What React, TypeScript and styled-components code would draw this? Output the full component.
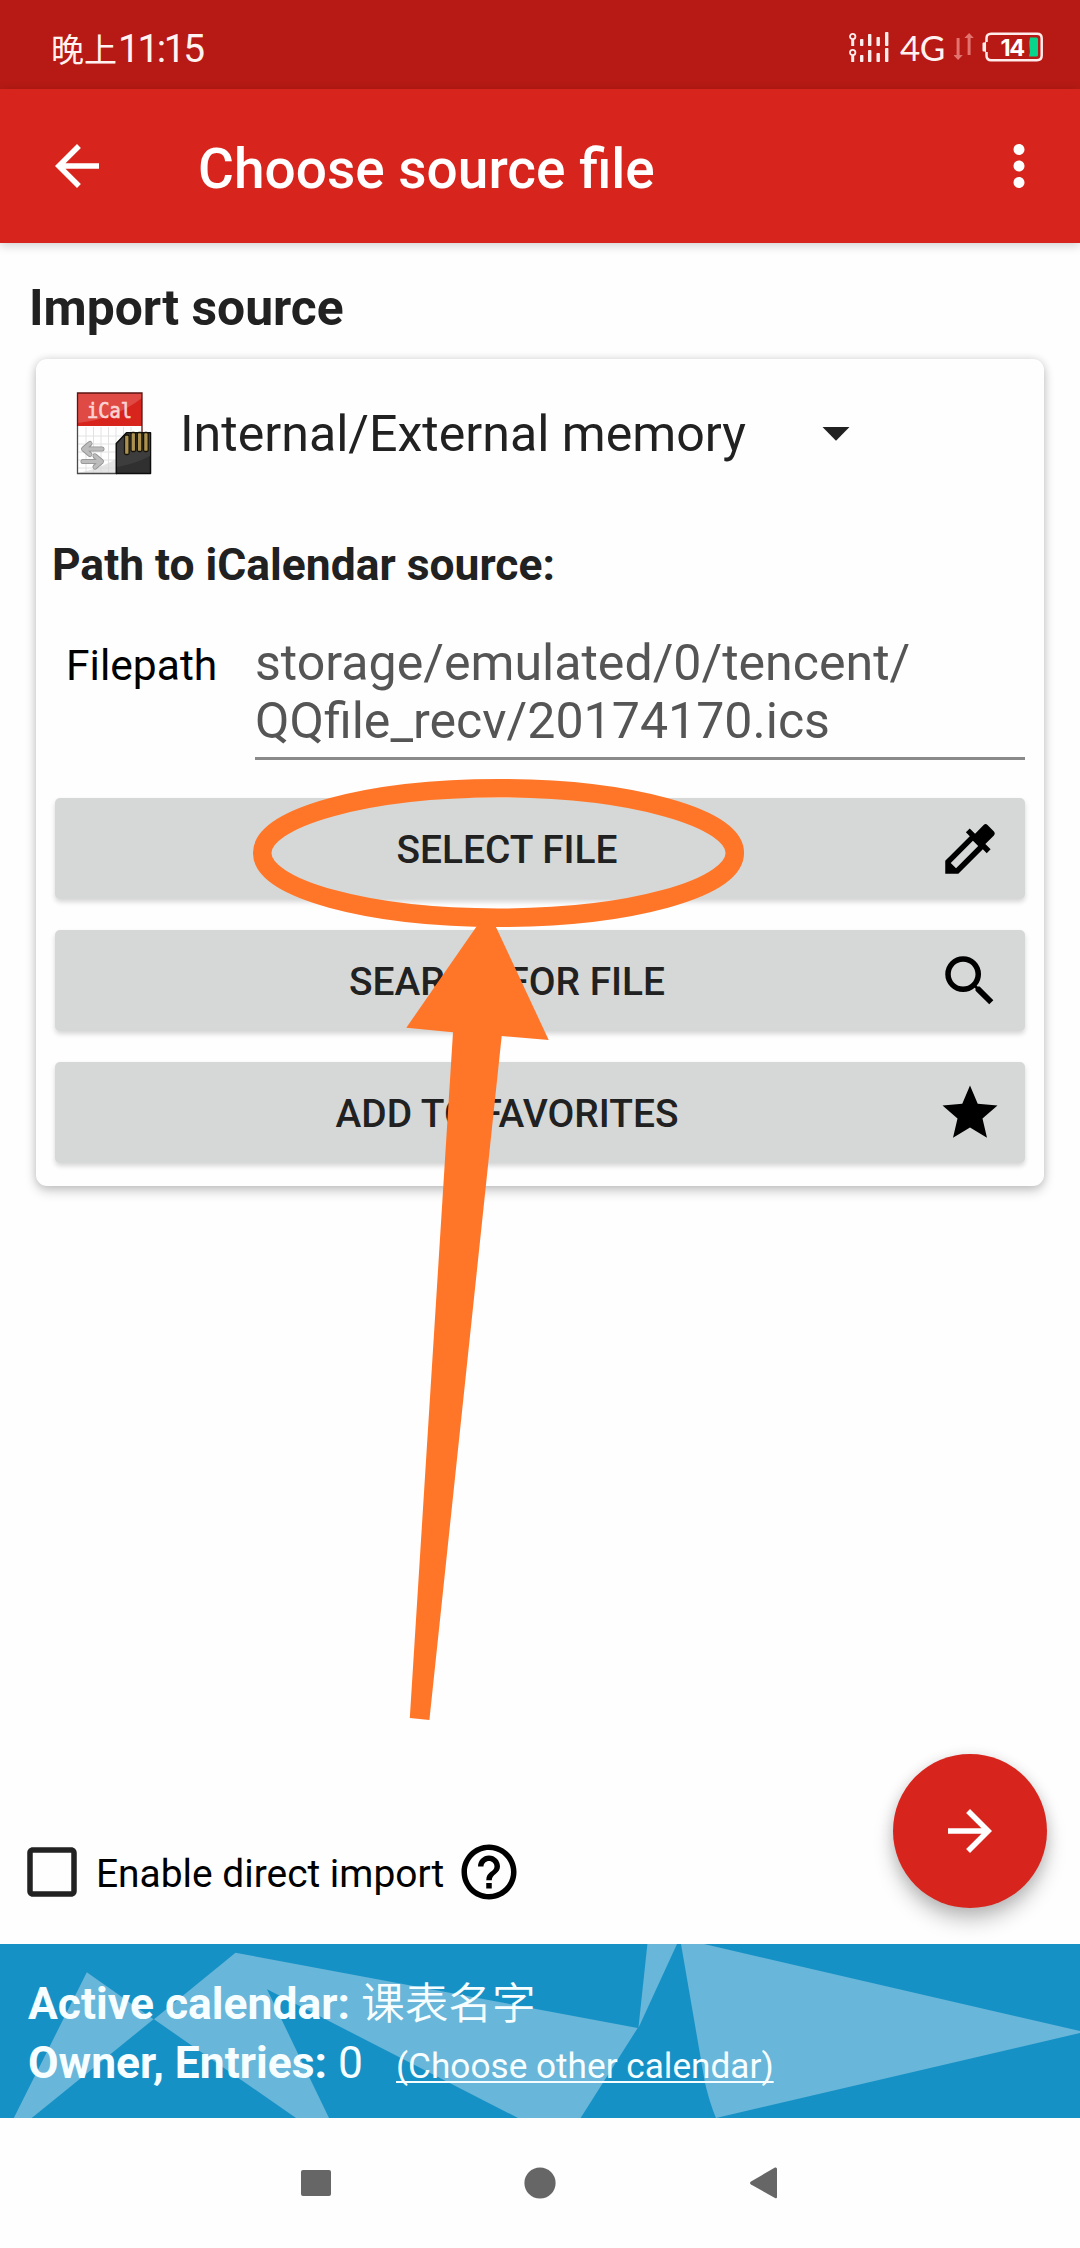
import React from 'react';
import styled, { createGlobalStyle } from 'styled-components';
import {
  MdArrowBack,
  MdArrowForward,
  MdCheckBoxOutlineBlank,
  MdColorize,
  MdHelpOutline,
  MdMoreVert,
  MdSearch,
  MdStar,
} from 'react-icons/md';

const Global = createGlobalStyle`
  * { box-sizing: border-box; }
  body {
    margin: 0;
    background: #fefefe;
    font-family: Roboto, "Noto Sans CJK SC", sans-serif;
  }
  svg { display: block; flex: none; }
`;

const Screen = styled.div`
  position: relative;
  display: flex;
  flex-direction: column;
  width: 1080px;
  height: 2248px;
  overflow: hidden;
  background: #fefefe;
`;

const StatusBar = styled.div`
  display: flex;
  align-items: center;
  justify-content: space-between;
  height: 89px;
  padding: 4px 36px 0 51px;
  background: #b71a14;
  color: #fff3f1;
`;

const Clock = styled.div`
  display: flex;
  align-items: baseline;
  padding-top: 3px;
  font: 400 33px/44px "Noto Sans CJK SC", sans-serif;
`;

const ClockDigits = styled.span`
  padding-left: 1px;
  font-family: Roboto, sans-serif;
  font-size: 38.8px;
  letter-spacing: -2.4px;
`;

const StatusIcons = styled.div`
  display: flex;
  align-items: center;
`;

const Network = styled.span`
  margin: 0 7px 0 11px;
  width: 47px;
  font: 400 35px/44px Lato, sans-serif;
  letter-spacing: -0.5px;
`;

const AppBar = styled.header`
  position: relative;
  display: flex;
  align-items: center;
  height: 154px;
  padding: 0 28px 0 44px;
  background: #d7241d;
  color: #fff;
  box-shadow: 0 2px 10px rgba(0, 0, 0, 0.2);
`;

const Title = styled.h1`
  flex: 1;
  margin: 0;
  padding: 6px 0 0 88px;
  font-size: 55px;
  line-height: 64px;
  font-weight: 500;
`;

const Content = styled.main`
  display: flex;
  flex-direction: column;
  flex: 1;
  padding: 36px 36px 36px;
`;

const Heading = styled.h2`
  margin: 0 0 22px -7px;
  font-size: 49.8px;
  line-height: 58px;
  font-weight: 700;
  color: #212121;
`;

const Card = styled.section`
  display: flex;
  flex-direction: column;
  height: 827px;
  padding: 25px 19px 0;
  border-radius: 11px;
  background: #fefefe;
  box-shadow: 0 5px 12px rgba(0, 0, 0, 0.2), 0 0 9px rgba(0, 0, 0, 0.12);
`;

const Spinner = styled.div`
  display: flex;
  align-items: center;
  height: 100px;
  padding-left: 18px;
  color: #212121;
`;

const SpinnerText = styled.span`
  width: 663px;
  padding-left: 21px;
  font-size: 50.1px;
  line-height: 58px;
`;

const PathLabel = styled.h3`
  margin: 55px 0 0 -3px;
  font-size: 44.4px;
  line-height: 52px;
  font-weight: 700;
  color: #212121;
`;

const FieldRow = styled.div`
  display: flex;
  align-items: flex-start;
  margin: 43px 0 38px;
  padding-left: 11px;
`;

const FieldLabel = styled.label`
  width: 189px;
  padding-top: 5px;
  font-size: 42.6px;
  line-height: 52px;
  color: #000;
`;

const PathInput = styled.div`
  flex: 1;
  padding-bottom: 7px;
  border-bottom: 3px solid #8a8a8a;
  font-size: 50.1px;
  line-height: 58px;
  color: #555;
`;

const Buttons = styled.div`
  display: flex;
  flex-direction: column;
  gap: 31px;
`;

const ActionButton = styled.button`
  display: flex;
  align-items: center;
  height: 101px;
  padding: 0 22px;
  border: 0;
  border-radius: 5px;
  background: #d6d8d7;
  box-shadow: 0 3px 5px rgba(0, 0, 0, 0.16);
  color: #000;
  font-family: inherit;
`;

const ButtonLabel = styled.span`
  flex: 1;
  padding-top: 2px;
  text-align: center;
  font-size: 38.9px;
  line-height: 46px;
  font-weight: 500;
  color: #212121;
`;

const BottomRow = styled.div`
  display: flex;
  align-items: flex-end;
  justify-content: space-between;
  margin: auto -3px 0 -17px;
`;

const CheckOption = styled.div`
  display: flex;
  align-items: center;
  padding-bottom: 3px;
  color: #000;
`;

const CheckLabel = styled.span`
  width: 371px;
  padding: 3px 0 0 11px;
  font-size: 38.9px;
  line-height: 46px;
`;

const Fab = styled.button`
  display: flex;
  align-items: center;
  justify-content: center;
  width: 154px;
  height: 154px;
  padding: 0;
  border: 0;
  border-radius: 50%;
  background: #d7241d;
  color: #fff;
  box-shadow: 0 13px 20px rgba(0, 0, 0, 0.22), 0 2px 14px rgba(0, 0, 0, 0.12);
`;

const Banner = styled.footer`
  position: relative;
  display: flex;
  flex-direction: column;
  height: 174px;
  padding: 31px 28px 0;
  background: #1691c6;
  color: #f6feff;
`;

const BannerArt = styled.svg`
  position: absolute;
  inset: 0;
`;

const BannerLine = styled.div`
  position: relative;
  display: flex;
  align-items: baseline;
  height: 59px;
  font-size: 44.4px;
  line-height: 58px;
  white-space: pre;
`;

const CalendarName = styled.span`
  font-family: "Noto Sans CJK SC", sans-serif;
  font-size: 43.7px;
  line-height: 36px;
  font-weight: 350;
`;

const CalendarLink = styled.a`
  margin-left: 33px;
  font-size: 35.2px;
  line-height: 44px;
  text-decoration: underline;
  text-decoration-thickness: 2px;
  text-underline-offset: 3px;
  text-decoration-skip-ink: none;
`;

const NavBar = styled.nav`
  display: flex;
  align-items: center;
  justify-content: center;
  gap: 192px;
  height: 130px;
`;

const Annotation = styled.svg`
  position: absolute;
  left: 0;
  top: 0;
  pointer-events: none;
`;

const signalBars = [
  [11, 7], [19, 12], [27.5, 9], [36, 14],
];

const SignalIcon = () => (
  <svg width="40" height="32" viewBox="0 0 40 32" fill="#ffeceb">
    {[15, 31].map((base) => (
      <g key={base}>
        <circle cx="3.7" cy={base - 9.5} r="2.7" fill="none" stroke="#ffeceb" strokeWidth="1.8" />
        <rect x="2.2" y={base - 7} width="3" height="7" />
        {signalBars.map(([x, h]) => (
          <rect key={x} x={x} y={base - h} width="3.4" height={h} rx="0.8" />
        ))}
      </g>
    ))}
  </svg>
);

const DataIcon = () => (
  <svg width="20" height="30" viewBox="0 0 20 30" fill="#e2736e">
    <path d="M2.6 6h3v17h3.2l-4.7 5-4.7-5h3.2z" />
    <path d="M13.6 23h3V6h3.2l-4.7-5-4.7 5h3.2z" />
  </svg>
);

const BatteryIcon = () => (
  <svg width="62" height="30" viewBox="0 0 62 30">
    <rect x="0.5" y="10.5" width="2.6" height="9" rx="1" fill="#ffeceb" />
    <path d="M4.5 10V6.5Q4.5 1.8 9.2 1.8H55Q59.7 1.8 59.7 6.5V23.5Q59.7 28.2 55 28.2H9.2Q4.5 28.2 4.5 23.5V20" fill="none" stroke="#ffeceb" strokeWidth="2.5" />
    <path d="M3.3 10V20" stroke="#ffeceb" strokeWidth="1.5" />
    <path d="M48 5.5h6.5q1.5 0 1.5 1.5v16q0 1.5-1.5 1.5H47q1.5-5 .5-9.500t.5-9.500z" fill="#06d58b" />
    <text x="18.5" y="23.5" fontFamily="Inter, sans-serif" fontWeight="700" fontSize="23.5" letterSpacing="-1.5" fill="#fff">14</text>
  </svg>
);

const ICalIcon = () => (
  <svg width="86" height="90" viewBox="0 0 86 90">
    <path d="M4.5 37H69V84.5H4.5z" fill="#fff" />
    <path d="M13 38V84M20.5 38V84M28 38V84M35.5 38V84M43 38V84M50.5 38V84M58 38V84M5 47H68M5 55H68M5 63H68M5 71H68M5 79H68" stroke="#e2e2e2" strokeWidth="1" />
    <path d="M5 84Q30 79 50 66V84z" fill="#d9d9d9" opacity="0.7" />
    <path d="M4.5 4H69V37H4.5z" fill="#d7241d" />
    <path d="M4.5 4H69V9Q42 30 4.5 34z" fill="#e04a44" />
    <path d="M4.5 37V84.5H44" fill="none" stroke="#4a4a4a" strokeWidth="1.3" />
    <path d="M4.5 37V4H69V44" fill="none" stroke="#5b1512" strokeWidth="1.3" />
    <text x="14" y="28.8" textLength="45" lengthAdjust="spacingAndGlyphs" fontFamily="DejaVu Sans Mono, monospace" fontSize="20.5" fill="#fbd3d2" stroke="#fbd3d2" strokeWidth="0.7">iCal</text>
    <g fill="none" stroke="#8f8f8f" strokeWidth="5" strokeLinecap="round" strokeLinejoin="round">
      <path d="M29 60H11M17 54.5L10.5 60L17 65.5" />
      <path d="M10 72.5H28M22 67L28.5 72.5L22 78" />
    </g>
    <g fill="none" stroke="#bcbcbc" strokeWidth="3.6" strokeLinecap="round" strokeLinejoin="round">
      <path d="M29 60H11M17 54.5L10.5 60L17 65.5" />
      <path d="M10 72.5H28M22 67L28.5 72.5L22 78" />
    </g>
    <path d="M43.3 54.5L53.5 43.7H77.5V84.5H43.3z" fill="#303030" stroke="#0d0d0d" strokeWidth="1.5" strokeLinejoin="round" />
    <path d="M44 55L54 44.5H77V67Q62 75 44 78z" fill="#3d3d3d" />
    <g fill="#ad924f" stroke="#17130a" strokeWidth="1.3">
      <rect x="51.5" y="46" width="4.6" height="19.5" rx="1.5" />
      <rect x="58" y="43.5" width="4.6" height="19" rx="1.5" />
      <rect x="64.3" y="43.5" width="4.6" height="19" rx="1.5" />
      <rect x="70.6" y="43.5" width="4.6" height="19" rx="1.5" />
    </g>
  </svg>
);

const actions = [
  { label: 'SELECT FILE', Icon: MdColorize },
  { label: 'SEARCH FOR FILE', Icon: MdSearch },
  { label: 'ADD TO FAVORITES', Icon: MdStar },
];

export default function App() {
  return (
    <Screen>
      <Global />
      <StatusBar>
        <Clock>晚上<ClockDigits>11:15</ClockDigits></Clock>
        <StatusIcons>
          <SignalIcon />
          <Network>4G</Network>
          <DataIcon />
          <svg width="8" height="1" />
          <BatteryIcon />
        </StatusIcons>
      </StatusBar>
      <AppBar>
        <MdArrowBack size={66} />
        <Title>Choose source file</Title>
        <MdMoreVert size={66} />
      </AppBar>
      <Content>
        <Heading>Import source</Heading>
        <Card>
          <Spinner>
            <ICalIcon />
            <SpinnerText>Internal/External memory</SpinnerText>
            <svg width="28" height="14" viewBox="0 0 28 14" fill="#212121">
              <path d="M0.5 0H27.5L14 13.7z" />
            </svg>
          </Spinner>
          <PathLabel>Path to iCalendar source:</PathLabel>
          <FieldRow>
            <FieldLabel>Filepath</FieldLabel>
            <PathInput>storage/emulated/0/tencent/<br />QQfile_recv/20174170.ics</PathInput>
          </FieldRow>
          <Buttons>
            {actions.map(({ label, Icon }) => (
              <ActionButton key={label}>
                <ButtonLabel>{label}</ButtonLabel>
                <Icon size={66} />
              </ActionButton>
            ))}
          </Buttons>
        </Card>
        <BottomRow>
          <CheckOption>
            <MdCheckBoxOutlineBlank size={66} color="#222" />
            <CheckLabel>Enable direct import</CheckLabel>
            <MdHelpOutline size={66} />
          </CheckOption>
          <Fab><MdArrowForward size={66} /></Fab>
        </BottomRow>
      </Content>
      <Banner>
        <BannerArt width="1080" height="174" viewBox="0 0 1080 174" fill="#68b6d9">
          <path d="M86.8 28.3L153.5 75.3L31.7 174H13.8z" />
          <path d="M235.5 8.7L637.7 84L580.6 174H518L267 45.3L329 174H296L154 75.3z" />
          <path d="M647.4 0H677L638.4 84z" />
          <path d="M681 0H704L1080 87V89L716 174Q710 160 705 139z" />
        </BannerArt>
        <BannerLine><b>Active calendar: </b><CalendarName>课表名字</CalendarName></BannerLine>
        <BannerLine><b>Owner, Entries: </b>0<CalendarLink>(Choose other calendar)</CalendarLink></BannerLine>
      </Banner>
      <NavBar>
        <svg width="32" height="32" viewBox="0 0 32 32" fill="#666"><rect x="1" y="3" width="30" height="26" rx="2" /></svg>
        <svg width="32" height="32" viewBox="0 0 32 32" fill="#666"><circle cx="16" cy="16" r="15.6" /></svg>
        <svg width="32" height="32" viewBox="0 0 32 32" fill="#666"><path d="M27 0.5Q29 0 29 2V30Q29 32 27 31L3 17.5Q1 16 3 14.5z" /></svg>
      </NavBar>
      <Annotation width="1080" height="2248" viewBox="0 0 1080 2248">
        <ellipse cx="498.5" cy="853" rx="236.3" ry="64.7" fill="none" stroke="#ff7629" strokeWidth="18.5" />
        <path d="M488 910L548.7 1040L501.7 1036L429.4 1720L409.8 1718L453 1032.3L406.3 1027.7z" fill="#ff7629" />
      </Annotation>
    </Screen>
  );
}
